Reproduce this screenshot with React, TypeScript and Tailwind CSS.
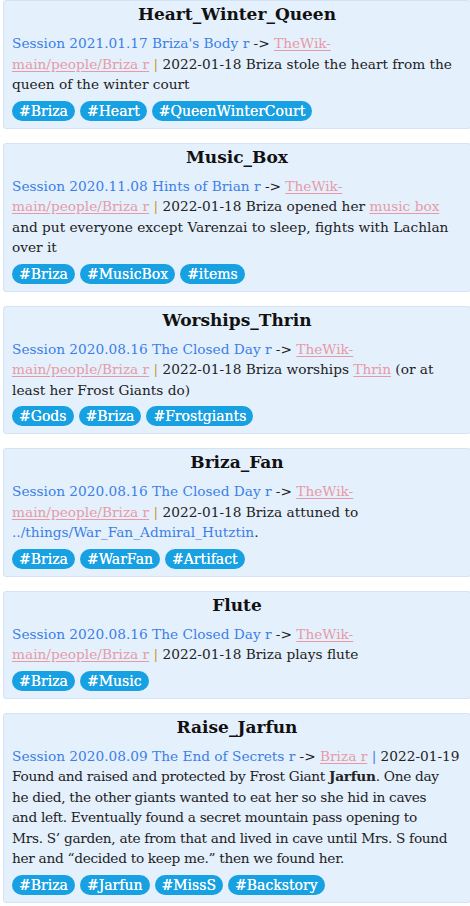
import React, { ReactNode } from 'react';

type Entry = {
  title: string;
  session: string;
  target: ReactNode;
  body: ReactNode;
  tags: string[];
  bluePipe?: boolean;
};

// keep the tail of the wiki link together so it only breaks after "TheWik-"
const WIKI = (
  <>
    TheWik-<span className="whitespace-nowrap">main/people/Briza r</span>
  </>
);

const Pink = ({ children }: { children: ReactNode }) => (
  <span className="text-[#e79aa6] underline underline-offset-2">{children}</span>
);

const ENTRIES: Entry[] = [
  {
    title: 'Heart_Winter_Queen',
    session: "Session 2021.01.17 Briza's Body r",
    target: WIKI,
    body: '2022-01-18 Briza stole the heart from the queen of the winter court',
    tags: ['#Briza', '#Heart', '#QueenWinterCourt'],
  },
  {
    title: 'Music_Box',
    session: 'Session 2020.11.08 Hints of Brian r',
    target: WIKI,
    body: (
      <>
        2022-01-18 Briza opened her <Pink>music box</Pink> and put everyone except Varenzai to
        sleep, fights with Lachlan over it
      </>
    ),
    tags: ['#Briza', '#MusicBox', '#items'],
  },
  {
    title: 'Worships_Thrin',
    session: 'Session 2020.08.16 The Closed Day r',
    target: WIKI,
    body: (
      <>
        2022-01-18 Briza worships <Pink>Thrin</Pink> (or at least her Frost Giants do)
      </>
    ),
    tags: ['#Gods', '#Briza', '#Frostgiants'],
  },
  {
    title: 'Briza_Fan',
    session: 'Session 2020.08.16 The Closed Day r',
    target: WIKI,
    body: (
      <>
        2022-01-18 Briza attuned to{' '}
        <span className="text-[#3b7fe6]">../things/War_Fan_Admiral_Hutztin</span>.
      </>
    ),
    tags: ['#Briza', '#WarFan', '#Artifact'],
  },
  {
    title: 'Flute',
    session: 'Session 2020.08.16 The Closed Day r',
    target: WIKI,
    body: '2022-01-18 Briza plays flute',
    tags: ['#Briza', '#Music'],
  },
  {
    title: 'Raise_Jarfun',
    session: 'Session 2020.08.09 The End of Secrets r',
    target: 'Briza r',
    bluePipe: true,
    body: (
      <>
        2022-01-19
        <br />
        <span className="tracking-[-0.3px]">
          Found and raised and protected by Frost Giant <b>Jarfun</b>. One day
          <br />
          he died, the other giants wanted to eat her so she hid in caves
          <br />
          and left. Eventually found a secret mountain pass opening to
          <br />
          Mrs. S’ garden, ate from that and lived in cave until Mrs. S found
          <br />
          her and “decided to keep me.” then we found her.
        </span>
      </>
    ),
    tags: ['#Briza', '#Jarfun', '#MissS', '#Backstory'],
  },
];

function Card({ entry }: { entry: Entry }) {
  return (
    <div className="w-[468px] border border-[#d5e3f6] rounded-[3px] bg-[#e5f0fd] px-[8px] pb-[7px]">
      <div className="text-center text-[17px] leading-[26px] font-bold text-[#111]">
        {entry.title}
      </div>
      <div className="mt-[6px] text-[13.7px] leading-[20.5px] text-[#222]">
        <span className="text-[#3b7fe6]">{entry.session}</span> -&gt; <Pink>{entry.target}</Pink>{' '}
        <span className={entry.bluePipe ? 'text-[#3b7fe6]' : 'text-[#c9962c]'}>|</span>{' '}
        {entry.body}
      </div>
      <div className="mt-[6px] flex flex-wrap gap-[5px]">
        {entry.tags.map(tag => (
          <span
            key={tag}
            className="h-[20px] rounded-full bg-[#17a1e3] px-[7px] text-[14px] leading-[20px] font-normal text-white [text-shadow:0_0_0.6px_#fff]"
          >
            {tag}
          </span>
        ))}
      </div>
    </div>
  );
}

export default function App() {
  return (
    <div
      className="min-h-screen w-[470px] overflow-hidden bg-white pl-[3px]"
      style={{ fontFamily: '"DejaVu Serif", serif' }}
    >
      <div className="flex flex-col gap-[14px]">
        {ENTRIES.map(entry => (
          <Card key={entry.title} entry={entry} />
        ))}
      </div>
    </div>
  );
}
